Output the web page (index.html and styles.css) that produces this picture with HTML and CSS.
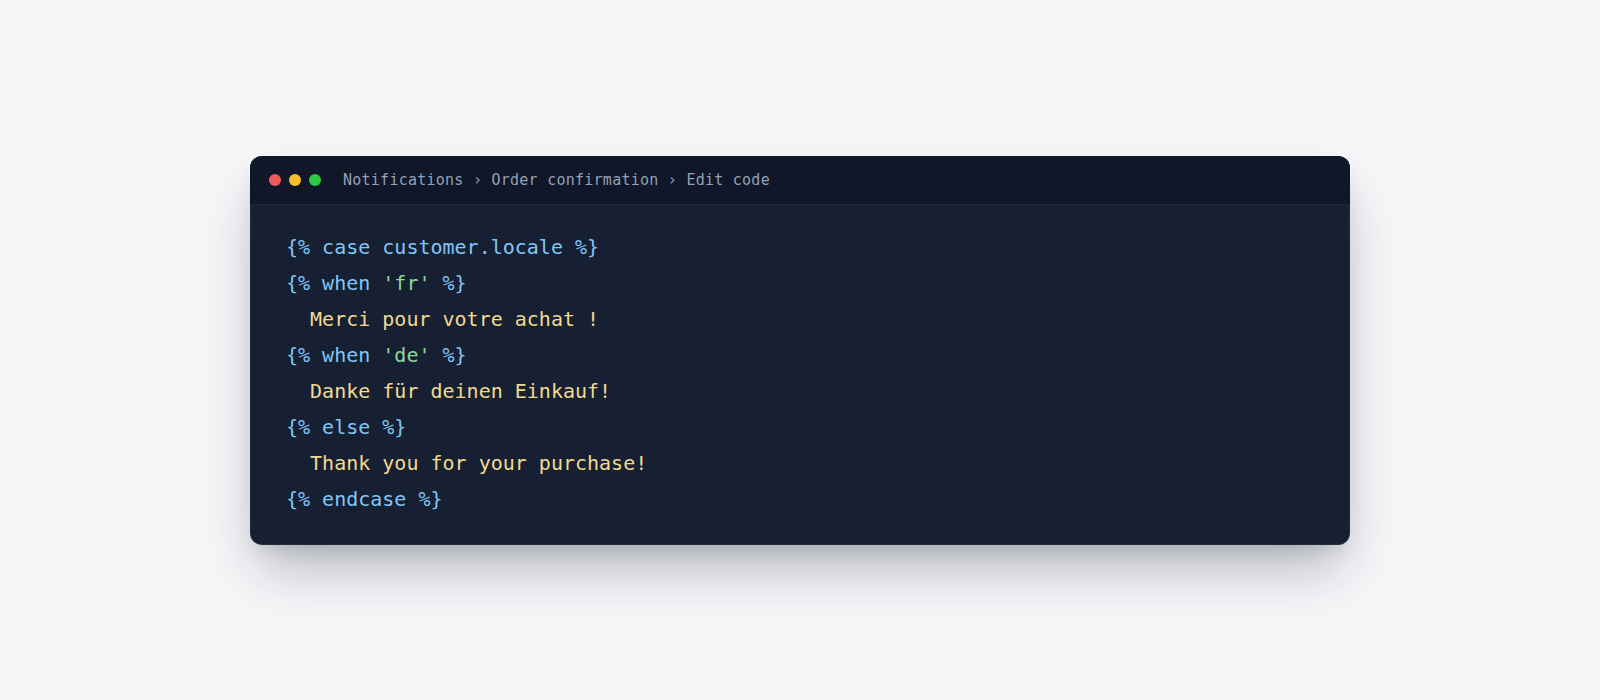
FILE: index.html
```html
<!DOCTYPE html>
<html lang="en">
<head>
<meta charset="utf-8">
<title>Edit code</title>
<link rel="stylesheet" href="styles.css">
</head>
<body>
<main class="stage">
  <section class="window">
    <header class="titlebar">
      <div class="lights">
        <span class="light red"></span>
        <span class="light yellow"></span>
        <span class="light green"></span>
      </div>
      <nav class="crumbs">Notifications › Order confirmation › Edit code</nav>
    </header>
    <pre class="code"><span class="tag">{% case customer.locale %}</span>
<span class="tag">{% when </span><span class="str">'fr'</span><span class="tag"> %}</span>
<span class="txt">  Merci pour votre achat !</span>
<span class="tag">{% when </span><span class="str">'de'</span><span class="tag"> %}</span>
<span class="txt">  Danke für deinen Einkauf!</span>
<span class="tag">{% else %}</span>
<span class="txt">  Thank you for your purchase!</span>
<span class="tag">{% endcase %}</span></pre>
  </section>
</main>
</body>
</html>
```

FILE: styles.css
```css
* { box-sizing: border-box; }
html, body { margin: 0; padding: 0; }
body {
  background: #f5f6f8;
  width: 1600px;
  height: 700px;
  overflow: hidden;
  font-family: "DejaVu Sans Mono", "Liberation Mono", monospace;
}
.stage {
  padding-top: 156px;
  padding-left: 250px;
}
.window {
  width: 1100px;
  border-radius: 12px;
  background: #172032;
  overflow: hidden;
  box-shadow: 0 0 0 1px rgba(255,255,255,0.06) inset, 0 30px 55px -10px rgba(15,23,42,0.30), 0 10px 20px -8px rgba(15,23,42,0.14);
}
.titlebar {
  height: 49px;
  display: flex;
  align-items: center;
  background: #0f1729;
  border-bottom: 1px solid #1f2a3d;
  padding-left: 19px;
}
.lights {
  display: flex;
  gap: 8px;
}
.light {
  width: 12px;
  height: 12px;
  border-radius: 50%;
}
.red { background: #f05a5a; }
.yellow { background: #fbbd2e; }
.green { background: #2bc840; }
.crumbs {
  margin-left: 22px;
  color: #94a0b5;
  font-size: 15px;
  letter-spacing: 0.25px;
}
.code {
  margin: 0;
  padding: 24px 36px 28px 36px;
  font-family: "DejaVu Sans Mono", "Liberation Mono", monospace;
  font-size: 20px;
  line-height: 36px;
  color: #80c6f7;
}
.tag { color: #80c6f7; }
.str { color: #8fd99a; }
.txt { color: #f1d991; }
```
